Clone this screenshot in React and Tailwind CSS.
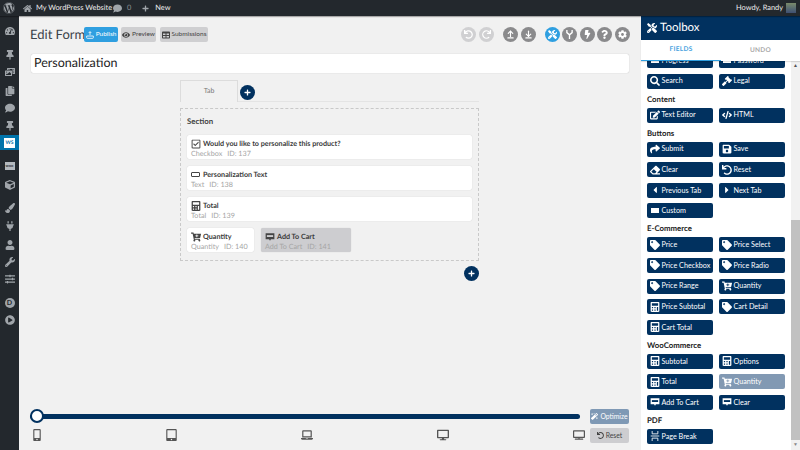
import {
  FaWordpress, FaHome, FaComment, FaPlus, FaTachometerAlt, FaThumbtack, FaPhotoVideo, FaCopy, FaCube,
  FaPaintBrush, FaPlug, FaUser, FaWrench, FaSlidersH, FaPlayCircle, FaTools, FaSearch, FaGavel, FaEdit,
  FaCode, FaShare, FaSave, FaEraser, FaUndo, FaRedo, FaCaretLeft, FaCaretRight, FaTag, FaCartPlus, FaCalculator,
  FaEye, FaTable, FaBolt, FaQuestion, FaCog, FaMagic, FaRegCheckSquare, FaMobileAlt, FaTabletAlt, FaLaptop, FaDesktop, FaTv,
} from "react-icons/fa";
import { ArrowUpFromLine, ArrowDownToLine } from "lucide-react";

const NAVY = "bg-[#01315f]";

function Bubble({ className = "", inner = "#01315f" }) {
  return (
    <svg viewBox="0 0 16 14" className={className} fill="currentColor">
      <path d="M1 1h14v9.5H9.5L8 13l-1.5-2.5H1z" />
      <rect x="3" y="4" width="10" height="3" fill={inner} />
    </svg>
  );
}

function PageBreak({ className = "" }) {
  return (
    <svg viewBox="0 0 12 14" className={className} fill="none" stroke="currentColor" strokeWidth="1.2">
      <path d="M2 0v4h8V0M0 7h12M2 14v-4h8v4" />
    </svg>
  );
}

function Fork({ className = "" }) {
  return (
    <svg viewBox="0 0 10 12" className={className} fill="none" stroke="currentColor" strokeWidth="1.8">
      <path d="M1.5 0v3.5L5 6.5l3.5-3V0M5 6.5V12" />
    </svg>
  );
}

function Rect() {
  return <span className="block w-[8px] h-[5px] bg-white" />;
}

function UpThick({ className = "" }) {
  return <ArrowUpFromLine className={className} strokeWidth={3} />;
}

function DownThick({ className = "" }) {
  return <ArrowDownToLine className={className} strokeWidth={3} />;
}

const sideIcons = [
  [FaTachometerAlt, "mt-[10px]"], [FaThumbtack, "mt-[14px]"], [FaPhotoVideo, "mt-[7px]"], [FaCopy, "mt-[9px]"],
  [FaComment, "mt-[7px]"], [FaThumbtack, "mt-[8px]"],
];
const sideIconsBottom = [
  [FaCube, "mt-[10px]"], [FaPaintBrush, "mt-[13px]"], [FaPlug, "mt-[8px]"], [FaUser, "mt-[9px]"],
  [FaWrench, "mt-[7px]"], [FaSlidersH, "mt-[7px]"],
];

function Sidebar() {
  return (
    <aside className="w-[19px] shrink-0 bg-[#23282d] text-[#a0a5aa] flex flex-col items-center">
      {sideIcons.map(([Icon, mt], i) => <Icon key={i} className={`w-[10px] h-[10px] shrink-0 ${mt}`} />)}
      <div className="w-full h-[15px] shrink-0 mt-[4px] bg-[#0073aa] flex items-center justify-center">
        <span className="w-[11px] h-[10px] bg-white text-[#0073aa] text-[5px] font-bold leading-[10px] text-center">WS</span>
      </div>
      <div className="w-[10px] h-[8px] shrink-0 mt-[12px] bg-[#b4b9be] flex items-center justify-center">
        <span className="text-[#23282d] text-[4px] font-bold leading-none">woo</span>
      </div>
      {sideIconsBottom.map(([Icon, mt], i) => <Icon key={i} className={`w-[10px] h-[10px] shrink-0 ${mt}`} />)}
      <div className="w-[10px] h-[10px] shrink-0 mt-[14px] rounded-full bg-[#a0a5aa] text-[#23282d] text-[7px] font-bold leading-[10px] text-center">D</div>
      <FaPlayCircle className="w-[10px] h-[10px] shrink-0 mt-[7px]" />
    </aside>
  );
}

function TopBar() {
  return (
    <header className="h-[16px] shrink-0 bg-[#23282d] text-[#eee] flex items-center text-[7.4px] shadow-[0_1px_1px_rgba(0,0,0,0.3)] relative z-10">
      <FaWordpress className="w-[12px] h-[12px] ml-[3px] text-[#a0a5aa]" />
      <FaHome className="w-[9px] h-[9px] ml-[8px] text-[#a0a5aa]" />
      <span className="ml-[4px] w-[69px] whitespace-nowrap">My WordPress Website</span>
      <FaComment className="w-[9px] h-[9px] ml-[8px] text-[#a0a5aa]" />
      <span className="ml-[5px] text-[#8a8f94]">0</span>
      <FaPlus className="w-[7px] h-[7px] ml-[11px] text-[#a0a5aa]" />
      <span className="ml-[6px]">New</span>
      <span className="ml-auto">Howdy, Randy</span>
      <span className="w-[10px] h-[10px] ml-[3px] mr-[4px] bg-gradient-to-b from-[#7a8a6a] to-[#3f4f72]" />
    </header>
  );
}

function HeadBtn({ icon: Icon, label, className }) {
  return (
    <button className={`h-[15px] rounded-[2px] flex items-center justify-center gap-[2px] text-[6.5px] leading-none whitespace-nowrap ${className}`}>
      <Icon className="w-[8px] h-[8px]" />
      {label}
    </button>
  );
}

function Round({ icon: Icon, className = "bg-[#8a8a8c]", iconClass = "w-[9px] h-[9px]", gap = "ml-[2.6px]" }) {
  return (
    <span className={`w-[15px] h-[15px] rounded-full flex items-center justify-center text-white ${className} ${gap}`}>
      <Icon className={iconClass} />
    </span>
  );
}

function AddBtn({ className = "" }) {
  return (
    <button className={`w-[15px] h-[15px] rounded-full ${NAVY} text-white flex items-center justify-center ${className}`}>
      <FaPlus className="w-[7px] h-[7px]" />
    </button>
  );
}

function Card({ icon: Icon, title, type, id, className = "bg-white" }) {
  return (
    <div className={`h-[24px] rounded-[2px] px-[4px] pt-[3px] shadow-[0_0_1px_rgba(0,0,0,0.2)] ${className}`}>
      <div className="flex items-center gap-[3px] h-[11px] text-[#3a3a3a] text-[7.2px] font-bold leading-none whitespace-nowrap">
        <span className="w-[9px] h-[10px] flex items-center justify-center shrink-0"><Icon className="w-[10px] h-[10px] text-[#444] shrink-0" /></span>
        {title}
      </div>
      <div className="text-[7.2px] leading-[9px] text-[#a5a5a5] whitespace-nowrap">{type}<span className="ml-[5px]">ID: {id}</span></div>
    </div>
  );
}

const TextBox = () => <span className="inline-block w-[9px] h-[5px] shrink-0 border border-[#444] rounded-[1px]" />;
const CartBubble = ({ className = "" }) => <Bubble className={className} inner="#cdcdd0" />;

function Editor() {
  return (
    <main className="flex-1 min-w-0 bg-[#f1f1f1] pl-[11px] pr-[12px] flex flex-col">
      <div className="flex items-center h-[15px] mt-[11px]">
        <h1 className="w-[54px] text-[13px] leading-none text-[#3c434a] whitespace-nowrap">Edit Form</h1>
        <HeadBtn icon={FaUpload2} label="Publish" className="w-[34px] bg-[#2f9fe0] text-white" />
        <HeadBtn icon={FaEye} label="Preview" className="w-[35px] bg-[#cfcfd1] text-[#444] ml-[3px]" />
        <HeadBtn icon={FaTable} label="Submissions" className="w-[48px] bg-[#cfcfd1] text-[#444] ml-[4px]" />
        <div className="ml-auto flex items-center -mr-[1px]">
          <Round icon={FaUndo} className="bg-[#d0d0d2]" />
          <Round icon={FaRedo} className="bg-[#d0d0d2]" gap="ml-[3px]" />
          <Round icon={UpThick} gap="ml-[9px]" />
          <Round icon={DownThick} />
          <Round icon={FaTools} className="bg-[#2f9fe0]" gap="ml-[9px]" />
          <Round icon={Fork} />
          <Round icon={FaBolt} />
          <Round icon={FaQuestion} />
          <Round icon={FaCog} />
        </div>
      </div>

      <div className="h-[19px] mt-[12px] ml-[1px] bg-white rounded-[2px] shadow-[0_0_1px_rgba(0,0,0,0.3)] px-[3px] flex items-center text-[12.5px] text-[#222]">
        Personalization
      </div>

      <div className="w-[299px] mt-[7px] ml-[150px]">
        <div className="flex items-center h-[22px] border-b border-[#e4e4e4]">
          <div className="w-[58px] h-[22px] -mb-px border border-b-0 border-[#dcdcdc] bg-[#f1f1f1] flex items-center justify-center text-[7px] text-[#777]">Tab</div>
          <AddBtn className="ml-[2px] mt-[3px]" />
        </div>
        <section className="mt-[6px] h-[153px] border border-dashed border-[#c9c9c9] px-[6px] pt-[7px] flex flex-col gap-[7px]">
          <h2 className="text-[7.8px] leading-[11px] font-bold text-[#444] mb-[1px]">Section</h2>
          <Card icon={FaRegCheckSquare} title="Would you like to personalize this product?" type="Checkbox" id="137" />
          <Card icon={TextBox} title="Personalization Text" type="Text" id="138" />
          <Card icon={FaCalculator} title="Total" type="Total" id="139" />
          <div className="flex gap-[7px]">
            <Card icon={FaCartPlus} title="Quantity" type="Quantity" id="140" className="bg-white w-[67px]" />
            <Card icon={CartBubble} title="Add To Cart" type="Add To Cart" id="141" className="bg-[#cdcdd0] w-[90px]" />
          </div>
        </section>
        <div className="flex justify-end mt-[5px]"><AddBtn /></div>
      </div>

      <div className="mt-auto mb-[7px]">
        <div className="flex items-center gap-[10px] h-[15px]">
          <div className="flex-1 h-[5px] rounded-full bg-[#01315f] relative">
            <span className="absolute left-0 top-[-5px] w-[14px] h-[14px] rounded-full bg-white border-[2px] border-[#01315f]" />
          </div>
          <button className="w-[39px] h-[15px] rounded-[2px] bg-[#7f99b5] text-white text-[6.8px] flex items-center justify-center gap-[2px]">
            <FaMagic className="w-[7px] h-[7px]" />Optimize
          </button>
        </div>
        <div className="flex items-center gap-[10px] h-[15px] mt-[4px]">
          <div className="flex-1 flex items-center justify-between text-[#555] pl-[2px] -mr-[5px] -mt-[2px]">
            <FaMobileAlt className="w-[10px] h-[12px]" />
            <FaTabletAlt className="w-[11px] h-[12px]" />
            <FaLaptop className="w-[12px] h-[12px]" />
            <FaDesktop className="w-[12px] h-[12px]" />
            <FaTv className="w-[12px] h-[12px]" />
          </div>
          <button className="w-[39px] h-[15px] rounded-[2px] bg-[#cdcdd0] text-[#444] text-[6.8px] flex items-center justify-center gap-[2px]">
            <FaUndo className="w-[7px] h-[7px]" />Reset
          </button>
        </div>
      </div>
    </main>
  );
}

function FaUpload2({ className = "" }) {
  return (
    <svg viewBox="0 0 12 12" className={className} fill="none" stroke="currentColor" strokeWidth="1.2">
      <path d="M1 7.5h10v2.5a1 1 0 0 1-1 1H2a1 1 0 0 1-1-1zM6 6V1M4 3l2-2 2 2" />
    </svg>
  );
}

const groups = [
  { title: null, rows: [[["Progress", Rect], ["Password", Rect]], [["Search", FaSearch], ["Legal", FaGavel]]] },
  { title: "Content", rows: [[["Text Editor", FaEdit], ["HTML", FaCode]]] },
  { title: "Buttons", rows: [
    [["Submit", FaShare], ["Save", FaSave]],
    [["Clear", FaEraser], ["Reset", FaUndo]],
    [["Previous Tab", FaCaretLeft], ["Next Tab", FaCaretRight]],
    [["Custom", Rect]],
  ] },
  { title: "E-Commerce", rows: [
    [["Price", FaTag], ["Price Select", FaTag]],
    [["Price Checkbox", FaTag], ["Price Radio", FaTag]],
    [["Price Range", FaTag], ["Quantity", FaCartPlus]],
    [["Price Subtotal", FaCalculator], ["Cart Detail", FaTag]],
    [["Cart Total", FaCalculator]],
  ] },
  { title: "WooCommerce", rows: [
    [["Subtotal", FaCalculator], ["Options", FaCalculator]],
    [["Total", FaCalculator], ["Quantity", FaCartPlus, true]],
    [["Add To Cart", Bubble], ["Clear", Bubble]],
  ] },
  { title: "PDF", rows: [[["Page Break", PageBreak]]] },
];

function ToolBtn({ label, icon: Icon, faded }) {
  return (
    <button className={`w-[66px] h-[15px] rounded-[2px] text-white text-[7.2px] leading-none flex items-center pl-[3px] whitespace-nowrap ${faded ? "bg-[#8299b3]" : NAVY}`}>
      <span className="w-[10px] h-[10px] mr-[1.5px] flex items-center justify-center shrink-0"><Icon className="w-[10px] h-[10px]" /></span>
      {label}
    </button>
  );
}

function Toolbox() {
  return (
    <aside className="w-[159px] shrink-0 flex flex-col bg-white">
      <div className={`h-[24px] shrink-0 ${NAVY} text-white flex items-center pl-[6px] gap-[3px] text-[11.5px]`}>
        <FaTools className="w-[10px] h-[10px]" />
        Toolbox
      </div>
      <div className="h-[21px] shrink-0 flex text-[6.5px] font-bold tracking-[0.3px] shadow-[0_1px_1px_rgba(0,0,0,0.12)] relative z-10 bg-white">
        <div className="w-[80px] flex items-center justify-center text-[#4aa3e0] border-b border-[#2f9fe0]">FIELDS</div>
        <div className="flex-1 flex items-center justify-center text-[#aaa]">UNDO</div>
      </div>
      <div className="flex-1 min-h-0 flex">
        <div className="flex-1 overflow-hidden pl-[6px]">
          <div className="-mt-[8px]">
            {groups.map((g, i) => (
              <div key={i}>
                {g.title && <h3 className="text-[7.8px] font-bold leading-[10px] text-[#222] mt-[5px] mb-[4px]">{g.title}</h3>}
                <div className="flex flex-col gap-[5.6px]">
                  {g.rows.map((row, j) => (
                    <div key={j} className="flex gap-[6px]">
                      {row.map(([label, icon, faded]) => <ToolBtn key={label} label={label} icon={icon} faded={faded} />)}
                    </div>
                  ))}
                </div>
              </div>
            ))}
          </div>
        </div>
        <div className="w-[9px] shrink-0 bg-[#f1f1f1] flex flex-col items-center">
          <span className="text-[5px] leading-[10px] text-[#555]">▲</span>
          <div className="w-full h-[220px] mt-auto bg-[#c1c1c1]" />
          <span className="text-[5px] leading-[10px] text-[#888]">▼</span>
        </div>
      </div>
    </aside>
  );
}

export default function App() {
  return (
    <div className="w-[800px] h-[450px] overflow-hidden flex flex-col font-['Lato',sans-serif] [text-rendering:geometricPrecision]">
      <TopBar />
      <div className="flex-1 min-h-0 flex">
        <Sidebar />
        <Editor />
        <Toolbox />
      </div>
    </div>
  );
}
